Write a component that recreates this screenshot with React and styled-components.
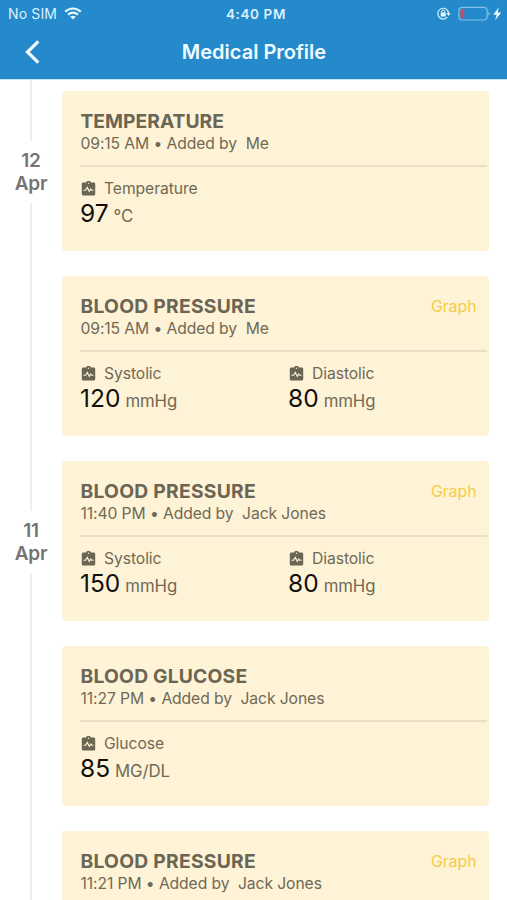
import React from "react";
import styled, { createGlobalStyle } from "styled-components";

const GlobalStyle = createGlobalStyle`
  * { box-sizing: border-box; }
  body { margin: 0; background: #fff; font-family: Inter, "Liberation Sans", sans-serif; }
`;

const Screen = styled.div`
  width: 507px;
  height: 900px;
  overflow: hidden;
  background: #fff;
`;

const Header = styled.header`
  height: 80px;
  background: #248acb;
  color: #f1fbff;
  border-bottom: 1px solid #c4e8f9;
`;

const StatusBar = styled.div`
  display: grid;
  grid-template-columns: 1fr auto 1fr;
  align-items: center;
  height: 27px;
  padding: 0 5px 0 8px;
  font-size: 14px;
  line-height: 18px;
  color: #d9f1ff;
`;

const Carrier = styled.div`
  display: flex;
  align-items: center;
  gap: 7px;
  letter-spacing: 0.15px;
`;

const Clock = styled.div`
  padding-left: 2px;
  font-size: 13.5px;
  font-weight: 600;
  letter-spacing: 0.6px;
`;

const StatusIcons = styled.div`
  display: flex;
  justify-content: flex-end;
  align-items: center;
`;

const NavBar = styled.div`
  display: grid;
  grid-template-columns: 61px 1fr 60px;
  align-items: center;
  height: 50px;
`;

const BackButton = styled.button`
  display: flex;
  padding: 0 0 0 24px;
  border: 0;
  background: none;
  color: inherit;
`;

const PageTitle = styled.h1`
  margin: 0;
  text-align: center;
  font-size: 20px;
  font-weight: 600;
  line-height: 26px;
  letter-spacing: 0;
`;

const DayGroup = styled.section`
  display: flex;
  height: ${(p) => p.$height}px;
`;

const Rail = styled.div`
  display: flex;
  flex-direction: column;
  align-items: center;
  width: 62px;
`;

const RailLine = styled.div`
  width: 2px;
  ${(p) => (p.$length ? `height: ${p.$length}px;` : "flex: 1;")}
  background: #eeeeef;
`;

const DayLabel = styled.div`
  height: 62px;
  padding-top: 8px;
  text-align: center;
  font-size: 19px;
  font-weight: 600;
  line-height: 23px;
  letter-spacing: -0.2px;
  color: #747474;
`;

const Cards = styled.div`
  display: flex;
  flex-direction: column;
  gap: 25px;
  width: 427px;
  padding-top: 11px;
`;

const Card = styled.article`
  flex: none;
  height: 160px;
  padding: 17px 2px 0 18px;
  border-radius: 4px;
  background: #fef3d7;
  color: #706955;
`;

const CardHead = styled.div`
  display: flex;
  justify-content: space-between;
  height: 25px;
  padding-right: 10.5px;
`;

const CardTitle = styled.h2`
  margin: 0;
  padding-left: 0.5px;
  font-size: 19.3px;
  font-weight: 700;
  line-height: 26px;
  letter-spacing: ${(p) => p.$tracking}px;
  color: #6b6553;
`;

const GraphLink = styled.a`
  font-size: 15.8px;
  line-height: 27px;
  letter-spacing: 0;
  color: #f5cc48;
`;

const Meta = styled.div`
  height: 34px;
  padding-left: 0.5px;
  border-bottom: 2px solid #e9dfc7;
  font-size: 15.7px;
  line-height: 22px;
  letter-spacing: -0.1px;
  white-space: pre;
`;

const Readings = styled.div`
  display: grid;
  grid-template-columns: 208px 1fr;
  padding-top: 12px;
`;

const ReadingLabel = styled.div`
  display: flex;
  align-items: center;
  gap: 8px;
  height: 20px;
  padding-left: 1px;
  font-size: 15.7px;
  line-height: 20px;
  letter-spacing: -0.08px;
`;

const Value = styled.div`
  height: 28px;
  line-height: 28px;
  font-size: 24.5px;
  letter-spacing: 0;
  color: #11100c;
`;

const Unit = styled.span`
  margin-left: 5px;
  font-size: 16.8px;
  letter-spacing: -0.1px;
  color: #706955;
`;

const WifiIcon = () => (
  <svg width="18" height="13" viewBox="0 0 18 13" fill="none" stroke="#e9f8ff" strokeWidth="2.2">
    <path d="M1.2 4.8C5.7.4 12.3.4 16.8 4.8M4 7.7c2.9-2.8 7.1-2.8 10 0" />
    <path d="M9 12.5 6.2 9.8c1.7-1.5 3.9-1.5 5.6 0z" fill="#e9f8ff" stroke="none" />
  </svg>
);

const StatusGlyphs = () => (
  <svg width="66" height="18" viewBox="0 0 66 18" fill="none">
    <path d="M11.3 12.2A5.4 5.4 0 1 1 12.6 8.5" stroke="#d8f1ff" strokeWidth="1.2" />
    <path d="m10.4 8.1 4.2 0-2.1 3z" fill="#e8f8ff" />
    <path d="M5.7 8V6.6a1.5 1.5 0 0 1 3 0V8" stroke="#e8f8ff" strokeWidth="1" />
    <rect x="4.8" y="7.6" width="4.9" height="3.8" rx=".5" fill="#e8f8ff" />
    <rect x="22.9" y="2.4" width="28.2" height="12.6" rx="3.4" stroke="#83c1e8" strokeWidth="1.2" />
    <path d="M24.6 6q0-1.9 1.9-1.9h1.7v9.2h-1.7q-1.9 0-1.9-1.9z" fill="#ca4c5c" />
    <path d="M52.3 6.7c1.9.6 1.9 3.4 0 4z" fill="#83c1e8" />
    <path d="m62.8 2.2-5.5 7.5h3.4l-1.5 5.6 6-7.9h-3.6z" fill="#f1fbff" />
  </svg>
);

const BackIcon = () => (
  <svg width="18" height="26" viewBox="0 0 18 26" fill="none">
    <path d="M14.3 2.3 3.5 13 14.3 23.7" stroke="#f1fbff" strokeWidth="3.3" />
  </svg>
);

const VitalsIcon = () => (
  <svg width="15" height="16" viewBox="0 0 15 16" fill="none">
    <path d="M2.2 1.6h2.9a2.5 2.5 0 0 1 4.8 0h2.9q1.4 0 1.4 1.4v10.2q0 1.4-1.4 1.4H2.2Q.8 14.6.8 13.2V3Q.8 1.6 2.2 1.6z" fill="#6b6553" />
    <circle cx="7.5" cy="2.2" r=".7" fill="#fef3d7" />
    <path d="M2.5 9.3h2.1l1.7-2.9 2 3.9 1.5-2.3.9 1.3h1.8" stroke="#fef3d7" strokeWidth="1.1" />
  </svg>
);

const days = [
  {
    day: "12",
    height: 370,
    entries: [
      { title: "TEMPERATURE", tracking: 0, time: "09:15 AM", author: "Me", readings: [["Temperature", "97", "°C"]] },
      { title: "BLOOD PRESSURE", tracking: 0.25, time: "09:15 AM", author: "Me", graph: true, readings: [["Systolic", "120", "mmHg"], ["Diastolic", "80", "mmHg"]] },
    ],
  },
  {
    day: "11",
    height: 560,
    entries: [
      { title: "BLOOD PRESSURE", tracking: 0.25, time: "11:40 PM", author: "Jack Jones", graph: true, readings: [["Systolic", "150", "mmHg"], ["Diastolic", "80", "mmHg"]] },
      { title: "BLOOD GLUCOSE", tracking: 0.2, time: "11:27 PM", author: "Jack Jones", readings: [["Glucose", "85", "MG/DL"]] },
      { title: "BLOOD PRESSURE", tracking: 0.25, time: "11:21 PM", author: "Jack Jones", graph: true, readings: [] },
    ],
  },
];

const Entry = ({ entry }) => (
  <Card>
    <CardHead>
      <CardTitle $tracking={entry.tracking}>{entry.title}</CardTitle>
      {entry.graph && <GraphLink>Graph</GraphLink>}
    </CardHead>
    <Meta>{`${entry.time} • Added by  ${entry.author}`}</Meta>
    <Readings>
      {entry.readings.map(([label, value, unit]) => (
        <div key={label}>
          <ReadingLabel><VitalsIcon />{label}</ReadingLabel>
          <Value>{value}<Unit>{unit}</Unit></Value>
        </div>
      ))}
    </Readings>
  </Card>
);

export default function App() {
  return (
    <Screen>
      <GlobalStyle />
      <Header>
        <StatusBar>
          <Carrier>No SIM <WifiIcon /></Carrier>
          <Clock>4:40 PM</Clock>
          <StatusIcons><StatusGlyphs /></StatusIcons>
        </StatusBar>
        <NavBar>
          <BackButton aria-label="Back"><BackIcon /></BackButton>
          <PageTitle>Medical Profile</PageTitle>
        </NavBar>
      </Header>
      <main>
        {days.map((group) => (
          <DayGroup key={group.day} $height={group.height}>
            <Rail>
              <RailLine $length={61} />
              <DayLabel>{group.day}<br />Apr</DayLabel>
              <RailLine />
            </Rail>
            <Cards>
              {group.entries.map((entry) => <Entry key={entry.time + entry.title} entry={entry} />)}
            </Cards>
          </DayGroup>
        ))}
      </main>
    </Screen>
  );
}
